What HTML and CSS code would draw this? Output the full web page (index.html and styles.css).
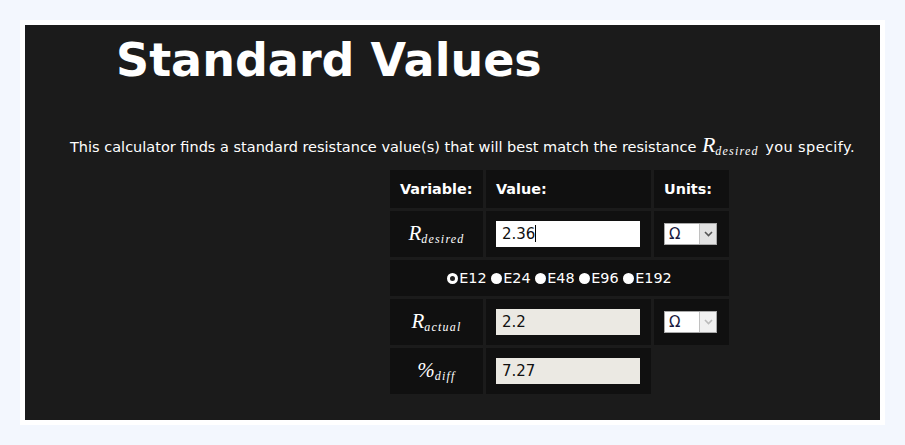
FILE: index.html
```html
<!DOCTYPE html>
<html>
<head>
<meta charset="utf-8">
<link rel="stylesheet" href="styles.css">
</head>
<body>
<div class="frame">
  <div class="panel">
    <h1 class="title">Standard Values</h1>
    <p class="desc">This calculator finds a standard resistance value(s) that will best match the resistance <span class="math">R<sub>desired</sub></span> <span class="tail">you specify.</span></p>
    <table class="calc">
      <tr class="head">
        <th class="c-var">Variable:</th>
        <th class="c-val">Value:</th>
        <th class="c-unit">Units:</th>
      </tr>
      <tr class="row">
        <td class="c-var"><span class="math big">R<sub>desired</sub></span></td>
        <td class="c-val"><div class="field white">2.36<span class="caret"></span></div></td>
        <td class="c-unit"><div class="select"><span class="sel-text">Ω</span><span class="sel-btn"><svg width="9" height="6" viewBox="0 0 9 6"><path d="M1 1 L4.5 4.5 L8 1" fill="none" stroke="#555" stroke-width="1.6"/></svg></span></div></td>
      </tr>
      <tr class="radios">
        <td colspan="3"><span class="radio on"></span>E12 <span class="radio"></span>E24 <span class="radio"></span>E48 <span class="radio"></span>E96 <span class="radio"></span>E192</td>
      </tr>
      <tr class="row">
        <td class="c-var"><span class="math big">R<sub>actual</sub></span></td>
        <td class="c-val"><div class="field ro">2.2</div></td>
        <td class="c-unit"><div class="select dis"><span class="sel-text">Ω</span><span class="sel-btn"><svg width="9" height="6" viewBox="0 0 9 6"><path d="M1 1 L4.5 4.5 L8 1" fill="none" stroke="#bbb" stroke-width="1.6"/></svg></span></div></td>
      </tr>
      <tr class="row">
        <td class="c-var"><span class="math big">%<sub>diff</sub></span></td>
        <td class="c-val"><div class="field ro">7.27</div></td>
      </tr>
    </table>
  </div>
</div>
</body>
</html>
```

FILE: styles.css
```css
html, body {
  margin: 0;
  padding: 0;
  background: #f3f7fe;
}
.frame {
  margin: 20px 0 0 20px;
  width: 855px;
  height: 395px;
  border: 5px solid #ffffff;
}
.panel {
  background: #1b1b1b;
  height: 395px;
  overflow: hidden;
  font-family: "DejaVu Sans", Verdana, sans-serif;
  color: #ffffff;
}
.title {
  margin: 0;
  padding: 8px 0 0 91px;
  font-size: 46px;
  line-height: 54px;
  font-weight: bold;
}
.desc {
  margin: 48px 0 0 45px;
  font-size: 14.5px;
  line-height: 20px;
  white-space: nowrap;
}
.desc .math {
  font-size: 22px;
  margin: 0 2px 0 1px;
}
.tail {
  letter-spacing: 0.4px;
}
.math {
  font-family: "Liberation Serif", "Times New Roman", serif;
  font-style: italic;
  font-size: 19px;
}
.math sub {
  font-size: 12px;
  vertical-align: -3px;
  letter-spacing: 1.2px;
}
.calc {
  margin: 6px 0 0 362px;
  border-spacing: 3px;
}
.calc th, .calc td {
  background: #101010;
  padding: 0;
}
.head th {
  height: 38px;
  text-align: left;
  font-size: 14.4px;
  font-weight: bold;
  padding-left: 10px;
}
.c-var { width: 83px; }
.c-val { width: 155px; }
.c-unit { width: 65px; }
.row td { height: 46px; }
.row td.c-var { text-align: center; padding-left: 0; }
.row td.c-val { padding-left: 10px; }
.row td.c-unit { padding-left: 10px; }
.big { font-size: 21px; }
.big sub { font-size: 12px; }
.field {
  width: 144px;
  height: 26px;
  box-sizing: border-box;
  padding-left: 6px;
  font-size: 15px;
  line-height: 26px;
  color: #111;
}
.white { background: #ffffff; }
.ro { background: #ebe9e3; }
.caret {
  display: inline-block;
  width: 1px;
  height: 17px;
  background: #000;
  vertical-align: -3px;
}
.select {
  width: 53px;
  height: 22px;
  display: flex;
  background: #ffffff;
  border: 1px solid #a9a9a9;
  box-sizing: border-box;
}
.sel-text {
  flex: 1;
  color: #1a1a40;
  font-size: 15px;
  line-height: 20px;
  padding-left: 4px;
}
.sel-btn {
  width: 16px;
  background: #e2e2e2;
  border-left: 1px solid #c0c0c0;
  display: flex;
  align-items: center;
  justify-content: center;
}
.dis .sel-btn { background: #f0f0f0; }
.radios td {
  height: 36px;
  text-align: center;
  font-size: 14.4px;
}
.radio {
  display: inline-block;
  width: 11px;
  height: 11px;
  border-radius: 50%;
  background: #ffffff;
  vertical-align: -1px;
  margin-right: 1px;
}
.radio.on {
  box-sizing: border-box;
  border: 3px solid #ffffff;
  background: #222;
}
```
